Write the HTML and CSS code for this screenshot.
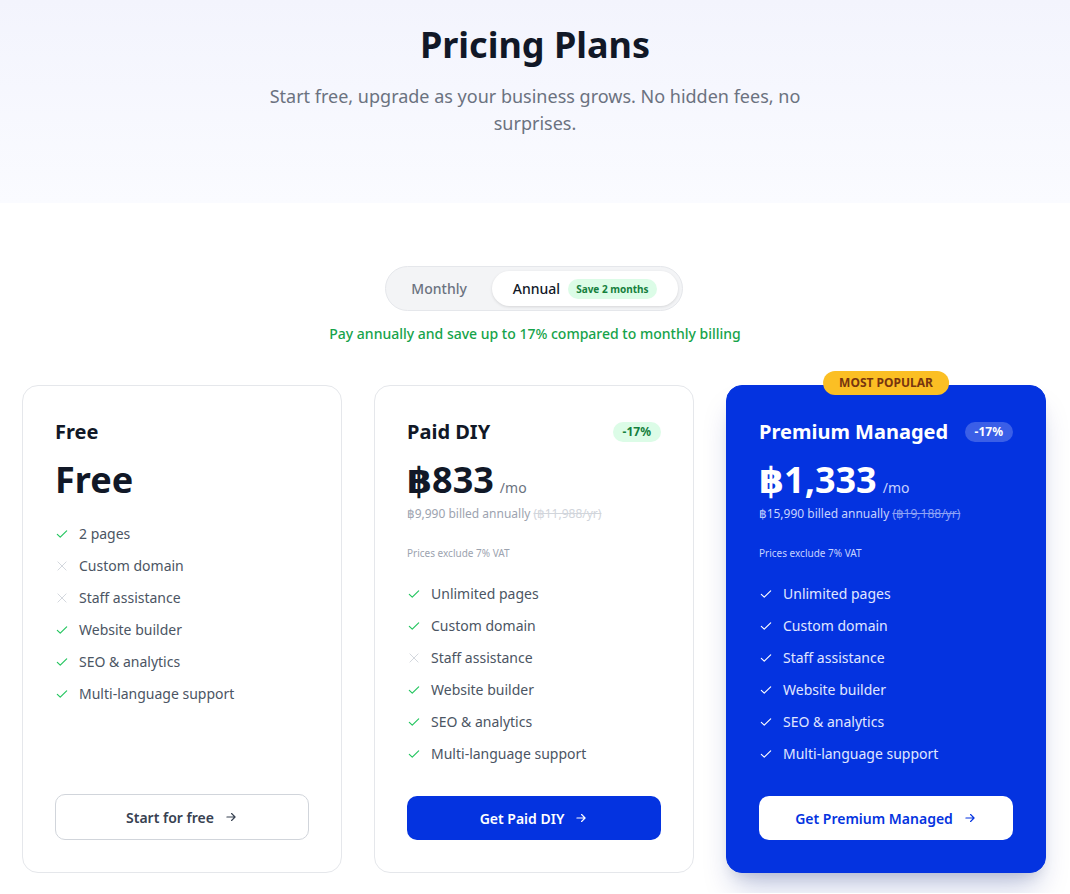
FILE: index.html
```html
<!DOCTYPE html>
<html lang="en">
<head>
<meta charset="utf-8">
<title>Pricing Plans</title>
<link rel="stylesheet" href="styles.css">
</head>
<body>
<section class="hero">
  <h1 class="hero-title">Pricing Plans</h1>
  <p class="hero-sub">Start free, upgrade as your business grows. No hidden fees, no surprises.</p>
</section>

<section class="pricing">
  <div class="toggle">
    <button class="toggle-btn">Monthly</button>
    <button class="toggle-btn active">Annual <span class="save">Save 2 months</span></button>
  </div>
  <p class="annual-note">Pay annually and save up to 17% compared to monthly billing</p>

  <div class="cards">
    <div class="card">
      <div class="card-head">
        <h3 class="plan-name">Free</h3>
      </div>
      <div class="price-row"><span class="price">Free</span></div>
      <ul class="features">
        <li class="feat yes"><svg viewBox="0 0 24 24"><path d="M4 12.5l5 5L20 6.5"/></svg>2 pages</li>
        <li class="feat no"><svg viewBox="0 0 24 24"><path d="M5 5l14 14M19 5L5 19"/></svg>Custom domain</li>
        <li class="feat no"><svg viewBox="0 0 24 24"><path d="M5 5l14 14M19 5L5 19"/></svg>Staff assistance</li>
        <li class="feat yes"><svg viewBox="0 0 24 24"><path d="M4 12.5l5 5L20 6.5"/></svg>Website builder</li>
        <li class="feat yes"><svg viewBox="0 0 24 24"><path d="M4 12.5l5 5L20 6.5"/></svg>SEO &amp; analytics</li>
        <li class="feat yes"><svg viewBox="0 0 24 24"><path d="M4 12.5l5 5L20 6.5"/></svg>Multi-language support</li>
      </ul>
      <a class="btn btn-outline">Start for free <svg viewBox="0 0 24 24"><path d="M5 12h14M13 6l6 6-6 6"/></svg></a>
    </div>

    <div class="card">
      <div class="card-head">
        <h3 class="plan-name">Paid DIY</h3>
        <span class="discount">-17%</span>
      </div>
      <div class="price-row"><span class="price">฿833</span><span class="per">/mo</span></div>
      <p class="billed">฿9,990 billed annually <s class="old">(฿11,988/yr)</s></p>
      <p class="vat">Prices exclude 7% VAT</p>
      <ul class="features">
        <li class="feat yes"><svg viewBox="0 0 24 24"><path d="M4 12.5l5 5L20 6.5"/></svg>Unlimited pages</li>
        <li class="feat yes"><svg viewBox="0 0 24 24"><path d="M4 12.5l5 5L20 6.5"/></svg>Custom domain</li>
        <li class="feat no"><svg viewBox="0 0 24 24"><path d="M5 5l14 14M19 5L5 19"/></svg>Staff assistance</li>
        <li class="feat yes"><svg viewBox="0 0 24 24"><path d="M4 12.5l5 5L20 6.5"/></svg>Website builder</li>
        <li class="feat yes"><svg viewBox="0 0 24 24"><path d="M4 12.5l5 5L20 6.5"/></svg>SEO &amp; analytics</li>
        <li class="feat yes"><svg viewBox="0 0 24 24"><path d="M4 12.5l5 5L20 6.5"/></svg>Multi-language support</li>
      </ul>
      <a class="btn btn-primary">Get Paid DIY <svg viewBox="0 0 24 24"><path d="M5 12h14M13 6l6 6-6 6"/></svg></a>
    </div>

    <div class="card card-featured">
      <span class="popular">MOST POPULAR</span>
      <div class="card-head">
        <h3 class="plan-name">Premium Managed</h3>
        <span class="discount">-17%</span>
      </div>
      <div class="price-row"><span class="price">฿1,333</span><span class="per">/mo</span></div>
      <p class="billed">฿15,990 billed annually <s class="old">(฿19,188/yr)</s></p>
      <p class="vat">Prices exclude 7% VAT</p>
      <ul class="features">
        <li class="feat yes"><svg viewBox="0 0 24 24"><path d="M4 12.5l5 5L20 6.5"/></svg>Unlimited pages</li>
        <li class="feat yes"><svg viewBox="0 0 24 24"><path d="M4 12.5l5 5L20 6.5"/></svg>Custom domain</li>
        <li class="feat yes"><svg viewBox="0 0 24 24"><path d="M4 12.5l5 5L20 6.5"/></svg>Staff assistance</li>
        <li class="feat yes"><svg viewBox="0 0 24 24"><path d="M4 12.5l5 5L20 6.5"/></svg>Website builder</li>
        <li class="feat yes"><svg viewBox="0 0 24 24"><path d="M4 12.5l5 5L20 6.5"/></svg>SEO &amp; analytics</li>
        <li class="feat yes"><svg viewBox="0 0 24 24"><path d="M4 12.5l5 5L20 6.5"/></svg>Multi-language support</li>
      </ul>
      <a class="btn btn-white">Get Premium Managed <svg viewBox="0 0 24 24"><path d="M5 12h14M13 6l6 6-6 6"/></svg></a>
    </div>
  </div>
</section>
</body>
</html>
```
FILE: styles.css
```css
* { box-sizing: border-box; }
html, body { margin: 0; padding: 0; }
body {
  font-family: "Noto Sans", "DejaVu Sans", sans-serif;
  color: #111827;
  background: #ffffff;
}

.hero {
  background: linear-gradient(180deg, #f3f4fd 0%, #fafbff 100%);
  padding: 25px 24px 66px;
  text-align: center;
}
.hero-title {
  margin: 0;
  font-size: 36px;
  line-height: 40px;
  font-weight: 700;
  color: #111827;
}
.hero-sub {
  margin: 18px auto 0;
  max-width: 576px;
  font-size: 18px;
  line-height: 27px;
  color: #6b7280;
}

.pricing {
  padding: 63px 0 20px;
  display: flex;
  flex-direction: column;
  align-items: center;
}

.toggle {
  display: flex;
  align-items: center;
  padding: 4px;
  background: #f3f4f6;
  border: 1px solid #e5e7eb;
  border-radius: 999px;
  height: 45px;
  transform: translateX(-1px);
}
.toggle-btn {
  font-family: inherit;
  border: 0;
  background: transparent;
  font-size: 14px;
  font-weight: 500;
  color: #6b7280;
  padding: 0 25px 0 21px;
  height: 35px;
  border-radius: 999px;
  display: flex;
  align-items: center;
  gap: 8px;
}
.toggle-btn.active {
  background: #ffffff;
  color: #111827;
  padding: 0 21px 0 21px;
  box-shadow: 0 1px 3px rgba(0, 0, 0, 0.12);
}
.save {
  background: #dcfce7;
  color: #15803d;
  font-size: 10px;
  font-weight: 700;
  padding: 2px 8px;
  border-radius: 999px;
  line-height: 16px;
}
.annual-note {
  margin: 13px 0 0;
  font-size: 14px;
  line-height: 20px;
  font-weight: 500;
  color: #16a34a;
}

.cards {
  margin-top: 41px;
  display: grid;
  grid-template-columns: repeat(3, 320px);
  gap: 32px;
  transform: translateX(-1px);
}
.card {
  position: relative;
  display: flex;
  flex-direction: column;
  background: #ffffff;
  border: 1px solid #e5e7eb;
  border-radius: 16px;
  padding: 32px;
}
.card-featured {
  background: #0433e0;
  border-color: #0433e0;
  color: #ffffff;
  box-shadow: 0 20px 30px -8px rgba(4, 30, 140, 0.25), 0 8px 14px -6px rgba(0, 0, 0, 0.12);
}
.popular {
  position: absolute;
  top: -15px;
  left: 50%;
  transform: translateX(-50%);
  background: #fbbf24;
  color: #78350f;
  font-size: 12px;
  font-weight: 700;
  line-height: 16px;
  padding: 4px 16px;
  border-radius: 999px;
  white-space: nowrap;
}

.card-head {
  display: flex;
  align-items: center;
  justify-content: space-between;
  height: 28px;
}
.plan-name {
  margin: 0;
  font-size: 20px;
  line-height: 28px;
  font-weight: 700;
}
.discount {
  background: #dcfce7;
  color: #15803d;
  font-size: 12px;
  font-weight: 700;
  line-height: 16px;
  padding: 2px 10px;
  border-radius: 999px;
}
.card-featured .discount {
  background: rgba(255, 255, 255, 0.22);
  color: #ffffff;
}

.price-row {
  margin-top: 14px;
  display: flex;
  align-items: baseline;
  gap: 6px;
}
.price {
  font-size: 36px;
  line-height: 40px;
  font-weight: 700;
}
.per {
  font-size: 14px;
  color: #6b7280;
}
.card-featured .per { color: #c7d2fe; }

.billed {
  margin: 6px 0 0;
  font-size: 12px;
  line-height: 16px;
  color: #9ca3af;
}
.billed .old { color: #d1d5db; }
.card-featured .billed { color: #c7d2fe; }
.card-featured .billed .old { color: #8da2f5; }

.vat {
  margin: 24px 0 0;
  font-size: 10px;
  line-height: 14px;
  color: #9ca3af;
}
.card-featured .vat { color: #c7d2fe; }

.features {
  list-style: none;
  margin: 24px 0 32px;
  padding: 0;
  display: flex;
  flex-direction: column;
  gap: 12px;
}
.feat {
  display: flex;
  align-items: center;
  gap: 10px;
  font-size: 14px;
  line-height: 20px;
  color: #4b5563;
}
.feat svg {
  width: 14px;
  height: 14px;
  fill: none;
  stroke-width: 2;
  stroke-linecap: round;
  stroke-linejoin: round;
  flex-shrink: 0;
}
.feat.yes svg { stroke: #22c55e; }
.feat.no svg { stroke: #d1d5db; stroke-width: 1.6; }
.card-featured .feat { color: #e0e7ff; }
.card-featured .feat.yes svg { stroke: #ffffff; }

.btn {
  margin-top: auto;
  height: 44px;
  display: flex;
  align-items: center;
  justify-content: center;
  gap: 10px;
  border-radius: 10px;
  font-size: 14px;
  font-weight: 600;
  text-decoration: none;
}
.btn svg {
  width: 14px;
  height: 14px;
  fill: none;
  stroke: currentColor;
  stroke-width: 2;
  stroke-linecap: round;
  stroke-linejoin: round;
}
.btn-outline {
  border: 1px solid #d1d5db;
  color: #374151;
  background: #ffffff;
  height: 46px;
}
.btn-primary {
  background: #0433e0;
  color: #ffffff;
}
.btn-white {
  background: #ffffff;
  color: #0433e0;
}
```
